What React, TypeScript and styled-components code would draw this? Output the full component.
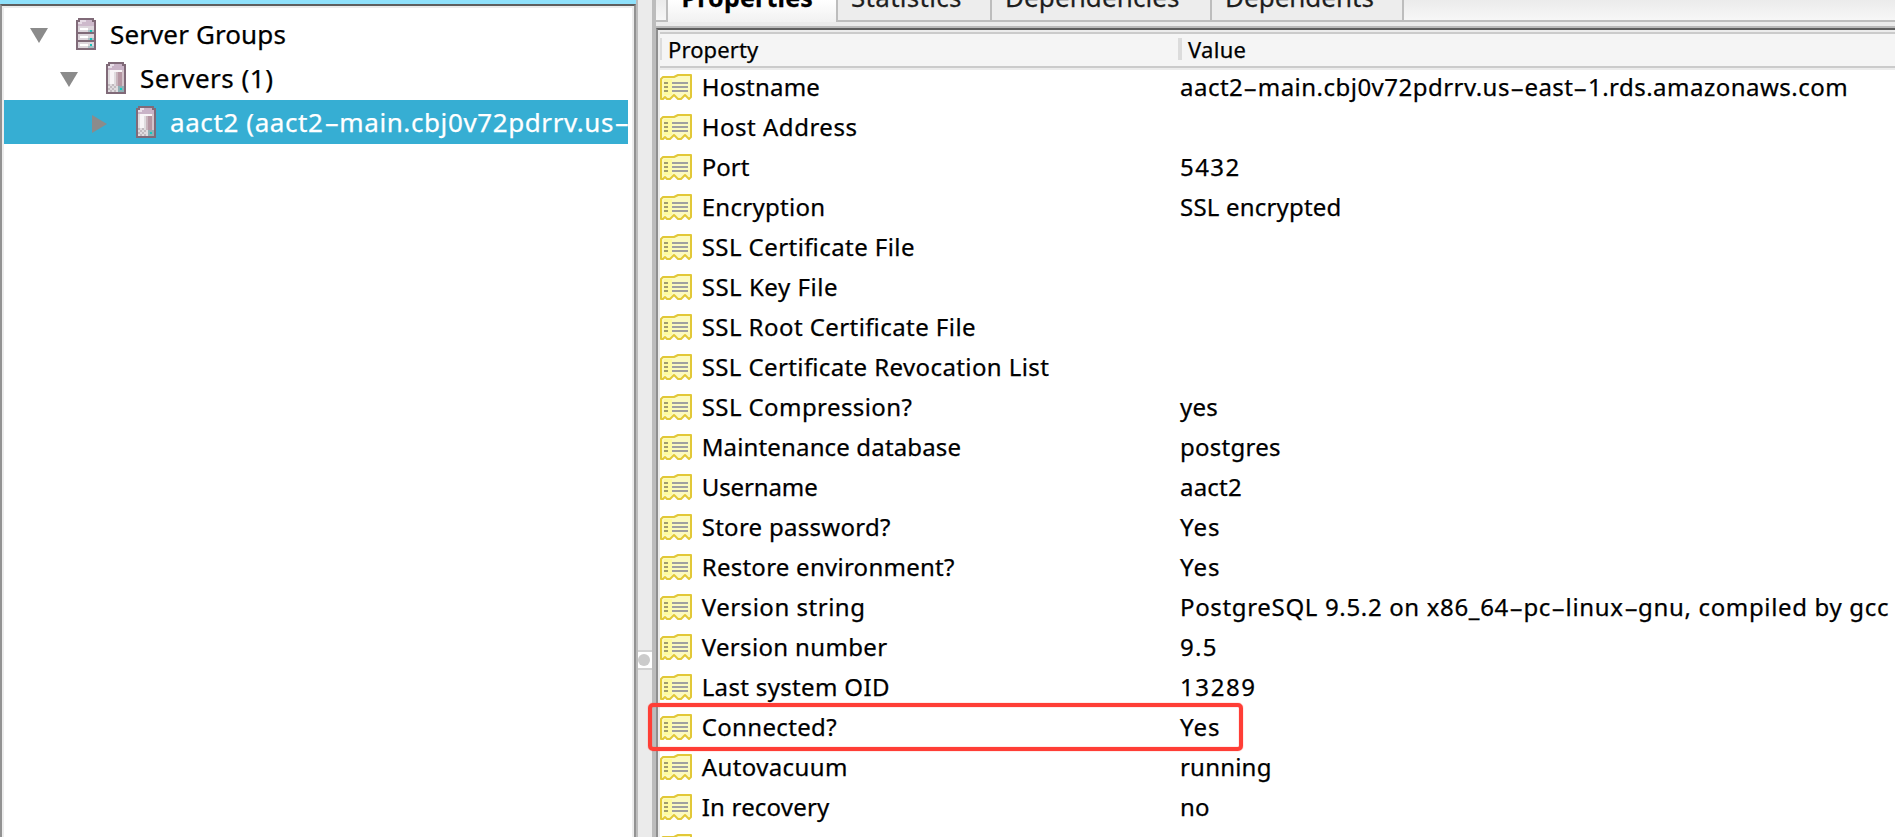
import React from 'react';
import styled, { createGlobalStyle } from 'styled-components';

const GlobalStyle = createGlobalStyle`
  * { box-sizing: border-box; }
  body { margin: 0; overflow: hidden; background: #ebebeb; }
`;

const Window = styled.div`
  display: flex;
  width: 1895px;
  height: 837px;
  overflow: hidden;
  color: #000;
  font-family: 'Noto Sans', 'Open Sans', sans-serif;
  -webkit-text-stroke: 0.25px;
  white-space: nowrap;
`;

/* ---------- text ---------- */

const Label = styled.span<{ $track?: number }>`
  display: block;
  letter-spacing: ${(p) => p.$track ?? 0}px;
  font-feature-settings: 'liga';
`;

const Dash = styled.span`
  display: inline-block;
  width: 0.604em;
  text-align: center;
  letter-spacing: 0;
  transform: scaleX(1.8);
`;

function Text({ children, track }: { children: string; track?: number }) {
  const parts = children.split('-');
  return (
    <Label $track={track}>
      {parts.map((part, i) => (
        <React.Fragment key={i}>
          {i > 0 && <Dash>-</Dash>}
          {part}
        </React.Fragment>
      ))}
    </Label>
  );
}

/* ---------- icons ---------- */

const Icon = styled.svg`
  display: block;
  flex: none;
`;

const ArrowSlot = styled.span`
  display: flex;
  justify-content: center;
  flex: none;
  width: 18px;
  margin-right: 28px;
  padding-top: 3px;
`;

function Arrow({ open }: { open: boolean }) {
  return (
    <ArrowSlot>
      {open ? (
        <Icon width="18" height="15"><path d="M0 0H18L9 15Z" fill="#8b8b8b" /></Icon>
      ) : (
        <Icon width="15" height="18"><path d="M0 0L15 9L0 18Z" fill="#8b8b8b" /></Icon>
      )}
    </ArrowSlot>
  );
}

function GroupIcon() {
  return (
    <Icon width="20" height="32" viewBox="0 0 20 32" shapeRendering="crispEdges">
      <path d="M2 0H18V2H20V32H0V2H2Z" fill="#806a78" />
      <path d="M4 2H16V4H18V8H2V4H4Z" fill="#cdb9cb" />
      <path d="M4 2H10V4H6V6H2V4H4Z" fill="#e6dbe5" />
      <path d="M2 8H18V14H2ZM2 16H18V22H2ZM2 24H18V30H2Z" fill="#ddd6dc" />
      <path d="M4 10H12V12H4ZM4 18H12V20H4ZM4 26H12V28H4Z" fill="#fff" />
      <path d="M12 12H18V14H12ZM12 20H18V22H12ZM12 28H18V30H12Z" fill="#a9bfc4" />
      <path d="M14 12H16V14H14ZM14 20H16V22H14ZM14 26H16V28H14Z" fill="#14c4bb" />
    </Icon>
  );
}

function ServerIcon() {
  return (
    <Icon width="20" height="32" viewBox="0 0 20 32" shapeRendering="crispEdges">
      <path d="M2 0H18V2H20V32H0V2H2Z" fill="#806a78" />
      <path d="M4 2H16V4H18V8H2V4H4Z" fill="#c9b3c7" />
      <path d="M4 2H8V4H6V6H2V4H4Z" fill="#e8dfe8" />
      <path d="M2 8H18V30H2Z" fill="#e0dcdf" />
      <path d="M4 8H16V10H4ZM4 10H8V22H4Z" fill="#f8f5f7" />
      <path d="M10 10H12V24H10Z" fill="#c9b5bd" />
      <path d="M12 10H16V24H12Z" fill="#b596a2" />
      <path d="M16 8H18V24H16Z" fill="#d3c3ca" />
      <path d="M2 22H4V24H2ZM6 22H8V24H6ZM4 24H6V26H4ZM8 24H10V26H8ZM2 26H4V28H2ZM6 26H8V28H6ZM4 28H6V30H4ZM8 28H10V30H8Z" fill="#c2bbc0" />
      <path d="M12 24H18V30H12Z" fill="#8fb0b5" />
      <path d="M14 26H16V28H14Z" fill="#10cbbf" />
    </Icon>
  );
}

function PropertyIcon() {
  return (
    <Icon width="32" height="26" viewBox="0 0 32 26">
      <path
        d="M1 5L3 3H12L14 3L18 1H31V23L29 25L27 23L25 21L23 23L21 25H18L16 23L14 21L12 23L10 25H7L5 23L3 25H1Z"
        fill="#fcfabf"
        stroke="#e2c838"
        strokeWidth="2"
        strokeLinejoin="round"
      />
      <path d="M4 5H12V21H4Z" fill="#fffb96" opacity="0.8" />
      <path d="M4 8H8V10H4ZM4 12H8V14H4ZM4 16H8V18H4Z" fill="#a19d6c" />
      <path d="M12 8H28V10H12ZM12 12H28V14H12ZM12 16H28V18H12Z" fill="#a0a0a0" />
    </Icon>
  );
}

/* ---------- object tree ---------- */

const Browser = styled.section`
  flex: none;
  width: 636px;
  border-top: 4px solid #8fe1fb;
`;

const TreeFrame = styled.div`
  height: 833px;
  border: solid;
  border-width: 2px 2px 0;
  border-color: #5e5e5e #929292;
`;

const Tree = styled.div`
  height: 100%;
  padding: 4px 4px 0 0;
  border: solid #ececec;
  border-width: 2px 2px 0;
  background: #fff;
`;

const TreeRow = styled.div<{ $depth: number; $selected?: boolean }>`
  display: flex;
  align-items: center;
  height: 44px;
  padding-left: ${(p) => 26 + p.$depth * 30}px;
  overflow: hidden;
  background: ${(p) => (p.$selected ? '#36aed3' : 'transparent')};
  color: ${(p) => (p.$selected ? '#fff' : '#000')};
  font-size: 26px;
  line-height: 43px;

  ${Label} { margin-left: 14px; }
`;

/* ---------- splitter ---------- */

const Splitter = styled.div`
  flex: none;
  width: 20px;
  padding-top: 650px;
  border: solid #bcbcbc;
  border-width: 0 4px 0 2px;
  background: #ebebeb;
`;

const Grip = styled.div`
  display: flex;
  align-items: center;
  justify-content: center;
  height: 20px;
  padding-right: 2px;
  border: solid #d2d2d2;
  border-width: 2px 0;
  background: #fff;

  &::before {
    content: '';
    width: 12px;
    height: 12px;
    border-radius: 50%;
    background: #cbcbcb;
  }
`;

/* ---------- property pane ---------- */

const Details = styled.section`
  flex: 1;
  min-width: 0;
`;

const TabBar = styled.div`
  display: flex;
  height: 22px;
  background: linear-gradient(#ebebeb, #f8f8f8);
`;

const TabSpacer = styled.div<{ $width?: number }>`
  flex: ${(p) => (p.$width ? 'none' : '1')};
  width: ${(p) => (p.$width ? `${p.$width}px` : 'auto')};
  border-bottom: 2px solid #bdbdbd;
  border-right: ${(p) => (p.$width ? '2px solid #bdbdbd' : '0')};
`;

const Tab = styled.div<{ $width: number; $active?: boolean }>`
  display: flex;
  flex: none;
  align-items: flex-end;
  width: ${(p) => p.$width}px;
  height: 22px;
  padding-left: ${(p) => (p.$active ? 13.5 : 13)}px;
  padding-bottom: ${(p) => (p.$active ? 7 : 5)}px;
  overflow: hidden;
  border-right: 2px solid #bdbdbd;
  border-bottom: ${(p) => (p.$active ? '0' : '2px solid #bdbdbd')};
  background: ${(p) => (p.$active ? 'linear-gradient(#fff, #f1f1f1)' : '#ededed')};
  color: ${(p) => (p.$active ? '#000' : '#1e1e1e')};
  font-size: ${(p) => (p.$active ? 25 : 26)}px;
  font-weight: ${(p) => (p.$active ? 700 : 400)};
  line-height: 35px;
`;

const ListFrame = styled.div`
  height: 811px;
  margin-top: 4px;
  border-top: 2px solid #bababa;
`;

const List = styled.div`
  height: 809px;
  border: solid;
  border-width: 2px 0 0 2px;
  border-color: #5e5e5e #8f8f8f;
  background: #fff;
`;

const ListInner = styled.div`
  border: solid #ececec;
  border-width: 2px 0 0 2px;
`;

const columns = 'display: grid; grid-template-columns: 518px 1fr;';

const Header = styled.div`
  ${columns}
  height: 36px;
  padding: 4px 0;
  border: solid #cbcbcb;
  border-width: 2px 0;
  box-shadow: 0 2px 0 #ececec;
  background: #f5f5f5;
  font-size: 22px;
  line-height: 29px;
`;

const HeaderCell = styled.div<{ $rule: number; $pad: number }>`
  height: 22px;
  padding-left: ${(p) => p.$pad}px;
  border-left: ${(p) => p.$rule}px solid #dcdcdc;

  ${Label} { margin-top: -3px; }
`;

const Rows = styled.div`
  display: flex;
  flex-direction: column;
`;

const Row = styled.div`
  ${columns}
  position: relative;
  height: 40px;
  font-size: 24px;
  line-height: 38px;
`;

const NameCell = styled.div`
  display: flex;
  align-items: center;
  height: 38px;
  gap: 9.7px;
`;

const ValueCell = styled.div`
  padding-left: 2px;
`;

const Highlight = styled.div`
  position: absolute;
  top: -5px;
  left: -12px;
  width: 595px;
  height: 48px;
  border: 4px solid #ff3e36;
  border-radius: 5px;
  box-shadow: 0 0 1px #ff3e36, inset 0 0 1px #ff3e36;
`;

const tree = [
  { name: 'Server Groups', track: 0.12, open: true, icon: <GroupIcon /> },
  { name: 'Servers (1)', track: 0.5, open: true, icon: <ServerIcon /> },
  { name: 'aact2 (aact2-main.cbj0v72pdrrv.us-', track: 0.6, open: false, icon: <ServerIcon /> },
];

const tabs = [
  { name: 'Properties', width: 170, track: 0.2 },
  { name: 'Statistics', width: 154, track: 0.3 },
  { name: 'Dependencies', width: 220, track: 0.1 },
  { name: 'Dependents', width: 192, track: 0 },
];

type Property = [name: string, nameTrack: number, value?: string, valueTrack?: number];

const properties: Property[] = [
  ['Hostname', 0.2, 'aact2-main.cbj0v72pdrrv.us-east-1.rds.amazonaws.com', 0.48],
  ['Host Address', 0.52],
  ['Port', 0, '5432', 1.45],
  ['Encryption', 0.28, 'SSL encrypted', 0.2],
  ['SSL Certificate File', 0.44],
  ['SSL Key File', 0.53],
  ['SSL Root Certificate File', 0.44],
  ['SSL Certificate Revocation List', 0.4],
  ['SSL Compression?', 0.42, 'yes', 0.2],
  ['Maintenance database', 0.15, 'postgres', 0.25],
  ['Username', -0.1, 'aact2', 0.2],
  ['Store password?', 0.28, 'Yes', 1.1],
  ['Restore environment?', 0.26, 'Yes', 1.1],
  ['Version string', 0.52, 'PostgreSQL 9.5.2 on x86_64-pc-linux-gnu, compiled by gcc', 0.66],
  ['Version number', 0.34, '9.5', 1.3],
  ['Last system OID', 0.34, '13289', 1.6],
  ['Connected?', 0.35, 'Yes', 1.1],
  ['Autovacuum', 0.4, 'running', 0.2],
  ['In recovery', 0.2, 'no', 0.2],
  ['Last XLOG receive location', 0.4],
];

export default function App() {
  return (
    <Window>
      <GlobalStyle />
      <Browser>
        <TreeFrame>
          <Tree>
            {tree.map((node, depth) => (
              <TreeRow key={node.name} $depth={depth} $selected={depth === 2}>
                <Arrow open={node.open} />
                {node.icon}
                <Text track={node.track}>{node.name}</Text>
              </TreeRow>
            ))}
          </Tree>
        </TreeFrame>
      </Browser>
      <Splitter>
        <Grip />
      </Splitter>
      <Details>
        <TabBar>
          <TabSpacer $width={12} />
          {tabs.map((tab, i) => (
            <Tab key={tab.name} $width={tab.width} $active={i === 0}>
              <Text track={tab.track}>{tab.name}</Text>
            </Tab>
          ))}
          <TabSpacer />
        </TabBar>
        <ListFrame>
          <List>
            <ListInner>
              <Header>
                <HeaderCell $rule={2} $pad={6}><Text track={0.1}>Property</Text></HeaderCell>
                <HeaderCell $rule={4} $pad={6}><Text track={0.3}>Value</Text></HeaderCell>
              </Header>
              <Rows>
                {properties.map(([name, nameTrack, value, valueTrack]) => (
                  <Row key={name}>
                    <NameCell>
                      <PropertyIcon />
                      <Text track={nameTrack}>{name}</Text>
                    </NameCell>
                    <ValueCell>{value && <Text track={valueTrack}>{value}</Text>}</ValueCell>
                    {name === 'Connected?' && <Highlight />}
                  </Row>
                ))}
              </Rows>
            </ListInner>
          </List>
        </ListFrame>
      </Details>
    </Window>
  );
}
